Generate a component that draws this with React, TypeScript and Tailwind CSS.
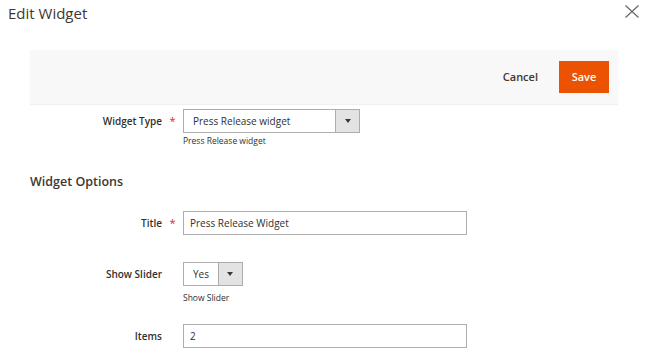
const font = { fontFamily: '"Open Sans", "Noto Sans", sans-serif' };

function Label({ text, required }: { text: string; required?: boolean }) {
    return (
        <div className="flex w-[183px] flex-none items-center">
            <div className="w-[162px] text-right text-[10px] font-semibold text-[#303030]">{text}</div>
            <div className="flex-1 text-center text-[11px] text-[#e22626]">{required ? '*' : ''}</div>
        </div>
    );
}

function SelectBox({ value, width, arrowW }: { value: string; width: string; arrowW: string }) {
    return (
        <div className={`flex h-[24px] ${width} border border-[#adadad] bg-white`}>
            <div className="flex flex-1 items-center px-[9px] text-[10px] text-[#303030]">{value}</div>
            <div className={`flex ${arrowW} items-center justify-center border-l border-[#adadad] bg-[#e3e3e3]`}>
                <svg width="6" height="4" viewBox="0 0 6 4">
                    <path d="M0 0h6L3 4z" fill="#41362f" />
                </svg>
            </div>
        </div>
    );
}

export default function App() {
    return (
        <div className="h-[360px] w-[648px] overflow-hidden bg-white" style={font}>
            <div className="flex h-[50px] items-start justify-between">
                <h1 className="pl-[8px] pt-[1px] text-[15px] leading-[24px] text-[#41362f]">Edit Widget</h1>
                <button className="mr-[9px] mt-[5px]">
                    <svg width="14" height="13" viewBox="0 0 14 13">
                        <path d="M0.5 0.5L13.5 12.5M13.5 0.5L0.5 12.5" stroke="#6b6b6b" strokeWidth="1.3" fill="none" />
                    </svg>
                </button>
            </div>

            <div className="mx-[30px] flex h-[54px] items-center justify-end gap-[21px] bg-[#f8f8f8] pr-[9px] shadow-[0_1px_1px_rgba(0,0,0,0.06)]">
                <button className="text-[11px] font-semibold text-[#41362f]">Cancel</button>
                <button className="h-[32px] w-[50px] bg-[#eb5202] text-[11px] font-semibold text-white">Save</button>
            </div>

            <div className="mt-[5px] flex items-start">
                <div className="flex h-[24px] items-center">
                    <Label text="Widget Type" required />
                </div>
                <div>
                    <SelectBox value="Press Release widget" width="w-[177px]" arrowW="w-[24px]" />
                    <div className="mt-[2px] text-[8.5px] leading-[12px] text-[#303030]">Press Release widget</div>
                </div>
            </div>

            <h2 className="ml-[30px] mt-[26px] text-[12.5px] font-semibold leading-[18px] text-[#41362f]">Widget Options</h2>

            <div className="mt-[20px] flex items-center">
                <Label text="Title" required />
                <div className="flex h-[24px] w-[284px] items-center border border-[#adadad] px-[6px] text-[10px] text-[#303030]">
                    Press Release Widget
                </div>
            </div>

            <div className="mt-[27px] flex items-start">
                <div className="flex h-[24px] items-center">
                    <Label text="Show Slider" />
                </div>
                <div>
                    <SelectBox value="Yes" width="w-[60px]" arrowW="w-[25px]" />
                    <div className="mt-[6px] text-[8.5px] leading-[12px] text-[#303030]">Show Slider</div>
                </div>
            </div>

            <div className="mt-[20px] flex items-center">
                <Label text="Items" />
                <div className="flex h-[24px] w-[284px] items-center border border-[#adadad] px-[6px] text-[10px] text-[#303030]">
                    2
                </div>
            </div>
        </div>
    );
}
